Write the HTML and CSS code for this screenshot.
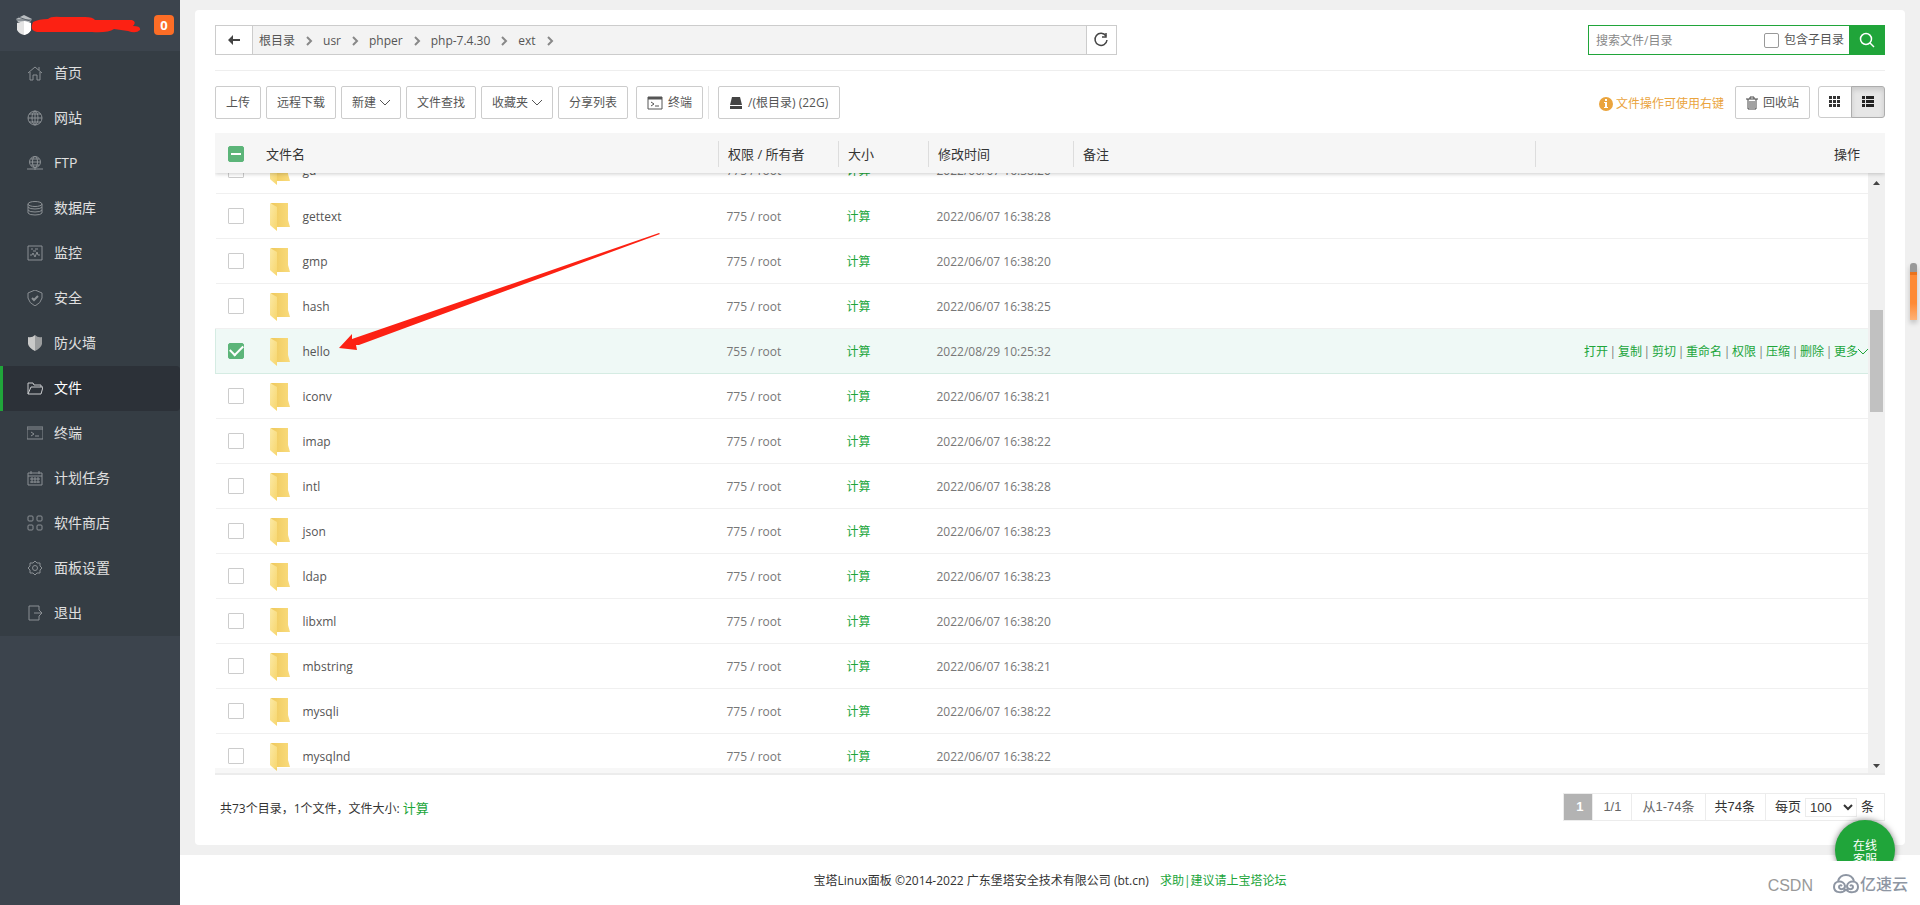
FILE: index.html
```html
<!DOCTYPE html>
<html lang="zh-CN">
<head>
<meta charset="utf-8">
<title>宝塔Linux面板</title>
<link rel="stylesheet" href="styles.css">
</head>
<body>
<svg class="defs" aria-hidden="true">
  <linearGradient id="flap" x1="0" y1="0" x2="1" y2="1"><stop offset="0" stop-color="#fbe9a4"/><stop offset="1" stop-color="#f7d66e"/></linearGradient>
  <linearGradient id="back" x1="0" y1="0" x2="1" y2="0"><stop offset="0" stop-color="#efc95c"/><stop offset="1" stop-color="#f9db7c"/></linearGradient>
  <symbol id="folder" viewBox="0 0 20 28">
    <path d="M1 0h17v17l2 7H7z" fill="url(#back)"/>
    <path d="M0 0l7 4v24l-6-5-1-1z" fill="url(#flap)"/>
  </symbol>
  <symbol id="down" viewBox="0 0 10 10"><path d="M0 2l5 5 5-5" fill="none" stroke="currentColor"/></symbol>
  <symbol id="right" viewBox="0 0 8 10"><path d="M2 1l4 4-4 4" fill="none" stroke="#888" stroke-width="2"/></symbol>
  <symbol id="term" viewBox="0 0 16 14"><path d="M1 1h14v12H1zM1 3h14M4 6l3 2-3 2M8 10h4" fill="none" stroke="currentColor"/><path d="M1 1h14v2H1z" fill="currentColor"/></symbol>
</svg>
<div class="app">
  <aside class="sidebar">
    <div class="brand">
      <svg class="logo" width="18" height="22" viewBox="0 0 18 22"><path d="M1 5l8-4 8 4-2 3H3z" fill="#b9bdc0"/><path d="M1 6h16M3 3l12 4" stroke="#5c646c"/><path d="M2 9l7-2 7 2v7q-2 4-7 5-5-1-7-5z" fill="#e4e4e4"/><path d="M9 7l7 2v7q-2 4-7 5z" fill="#fff"/></svg>
      <svg class="scribble" width="110" height="18" viewBox="0 0 110 18"><path d="M2 6q6-3 15-3Q20 0 30 1h24q8 0 10 3h37q5 2 1 6 8 0 7 4-4 4-12 1l-14-2q-6 4-22 3H6q-8-1-4-10z" fill="#fc2113"/></svg>
      <span class="badge">0</span>
    </div>
    <nav class="menu">
      <a href="#"><svg viewBox="0 0 16 16"><path d="M1 8l7-6 7 6M3 7v8h3v-5h4v5h3V7M12 5V2"/></svg>首页</a>
      <a href="#"><svg viewBox="0 0 16 16"><circle cx="8" cy="8" r="7"/><ellipse cx="8" cy="8" rx="3" ry="7"/><path d="M1 8h14M2 4h12M2 12h12M8 1v14"/></svg>网站</a>
      <a href="#"><svg viewBox="0 0 16 16"><circle cx="8" cy="7" r="5.500"/><ellipse cx="8" cy="7" rx="2.500" ry="5.500"/><path d="M3 7h10M4 4h8M4 10h8M8 12v3M0 14h16"/></svg>FTP</a>
      <a href="#"><svg viewBox="0 0 16 16"><ellipse cx="8" cy="4" rx="7" ry="2.500"/><path d="M1 4v9q1 2 7 2t7-2V4M1 7q1 2 7 2t7-2M1 10q1 2 7 2t7-2"/></svg>数据库</a>
      <a href="#"><svg viewBox="0 0 16 16"><path d="M1 1h14v14H1zM3 10h2l1-2 2 4 2-5 1 3h2M4 4h2M8 4h3M6 6h3"/></svg>监控</a>
      <a href="#"><svg viewBox="0 0 16 16"><path d="M8 0l7 3v5q-1 5-7 8-6-3-7-8V3z"/><path d="M5 8l2 2 4-4" stroke-width="2"/></svg>安全</a>
      <a href="#"><svg viewBox="0 0 16 16"><path d="M8 0q3 3 7 2v7q-1 4-7 7z" fill="#9b9d9e" stroke="none"/><path d="M8 0Q5 3 1 2v7q1 4 7 7z" fill="#c9c9c8" stroke="none"/></svg>防火墙</a>
      <a href="#" class="active"><svg viewBox="0 0 16 16"><path d="M1 14V3h5l1 2h7v2M1 14L4 7h12l-2 7z"/></svg>文件</a>
      <a href="#"><svg viewBox="0 0 16 16"><path d="M0 2h16v12H0zM0 4h16M4 7l3 2-3 2M8 11h4"/></svg>终端</a>
      <a href="#"><svg viewBox="0 0 16 16"><path d="M1 3h14v12H1zM1 6h14M4 1v3M12 1v3M3 9h10M3 12h10M5 7v6M8 7v6M11 7v6"/></svg>计划任务</a>
      <a href="#"><svg viewBox="0 0 16 16"><rect x="1" y="1" width="5" height="5" rx="1"/><rect x="10" y="1" width="5" height="5" rx="1"/><rect x="1" y="10" width="5" height="5" rx="1"/><rect x="10" y="10" width="5" height="5" rx="1"/></svg>软件商店</a>
      <a href="#"><svg viewBox="0 0 16 16"><circle cx="8" cy="8" r="2.500"/><path d="M6 3l2-2 2 2 3 0 0 3 2 2-2 2 0 3-3 0-2 2-2-2-3 0 0-3-2-2 2-2 0-3z"/></svg>面板设置</a>
      <a href="#"><svg viewBox="0 0 16 16"><path d="M12 5V1H2v14h10v-4M7 8h8M12 5l3 3-3 3"/></svg>退出</a>
    </nav>
  </aside>

  <div class="content">
    <main class="panel">
      <div class="pathrow">
        <div class="pathbar">
          <button class="back" aria-label="返回"><svg width="12" height="10" viewBox="0 0 12 10"><path d="M0 5l5-5v4h7v2H5v4z" fill="#444"/></svg></button>
          <div class="crumbs">
            <a href="#">根目录</a><svg class="sep"><use href="#right"/></svg><a href="#">usr</a><svg class="sep"><use href="#right"/></svg><a href="#">phper</a><svg class="sep"><use href="#right"/></svg><a href="#">php-7.4.30</a><svg class="sep"><use href="#right"/></svg><a href="#">ext</a><svg class="sep"><use href="#right"/></svg>
          </div>
          <button class="refresh" aria-label="刷新"><svg width="16" height="16" viewBox="0 0 16 16" fill="none" stroke="#444"><path d="M13 4a6 6 0 1 0 1 4" stroke-width="1.500"/><path d="M13 1v4H9" stroke-width="1.500"/></svg></button>
        </div>
        <form class="search">
          <input class="query" type="text" placeholder="搜索文件/目录" aria-label="搜索文件/目录">
          <input type="checkbox" id="sub"><label for="sub">包含子目录</label>
          <button type="button" aria-label="搜索"><svg width="16" height="16" viewBox="0 0 16 16" fill="none" stroke="#fff" stroke-width="1.500"><circle cx="7" cy="7" r="5.500"/><path d="M11 11l4 4"/></svg></button>
        </form>
      </div>

      <div class="toolbar">
        <button>上传</button>
        <button>远程下载</button>
        <button>新建<svg class="caret"><use href="#down"/></svg></button>
        <button>文件查找</button>
        <button>收藏夹<svg class="caret"><use href="#down"/></svg></button>
        <button>分享列表</button>
        <div class="termwrap"><button><svg class="ticon" width="16" height="14"><use href="#term"/></svg>终端</button></div>
        <button class="disk"><svg width="12" height="12" viewBox="0 0 12 12"><path d="M2 0h8l2 8H0zM0 9h12v3H0z" fill="#444"/></svg>/(根目录) (22G)</button>
        <div class="tip"><svg width="14" height="14" viewBox="0 0 14 14"><circle cx="7" cy="7" r="7" fill="#eaa43d"/><path d="M6 2h2v2H6zM5 5h3v5h1v1H5v-1h1V6H5z" fill="#fff"/></svg>文件操作可使用右键</div>
        <button><svg class="trash" width="12" height="14" viewBox="0 0 12 14" fill="none" stroke="#444"><path d="M0 3h12M4 3V1h4v2M2 3v10h8V3M4 5v7M6 5v7M8 5v7"/></svg>回收站</button>
        <div class="views">
          <button aria-label="图标视图"><svg width="12" height="12" viewBox="0 0 12 12" fill="#333"><path d="M0 0h3v3H0zM4 0h3v3H4zM8 0h3v3H8zM0 4h3v3H0zM4 4h3v3H4zM8 4h3v3H8zM0 8h3v3H0zM4 8h3v3H4zM8 8h3v3H8z"/></svg></button>
          <button class="on" aria-label="列表视图"><svg width="12" height="12" viewBox="0 0 12 12" fill="#222"><path d="M0 0h3v3H0zM4 0h8v3H4zM0 4h3v3H0zM4 4h8v3H4zM0 8h3v3H0zM4 8h8v3H4z"/></svg></button>
        </div>
      </div>

      <table class="files head">
        <colgroup><col class="c-check"><col class="c-name"><col class="c-perm"><col class="c-size"><col class="c-time"><col><col class="c-ops"></colgroup>
        <tr><th><input type="checkbox" class="partial" aria-label="全选"></th><th>文件名</th><th><span>权限 / 所有者</span></th><th><span>大小</span></th><th><span>修改时间</span></th><th><span>备注</span></th><th class="ops"><span>操作</span></th></tr>
      </table>
      <div class="listing">
        <div class="view">
          <table class="files body">
            <colgroup><col class="c-check"><col class="c-name"><col class="c-perm"><col class="c-size"><col class="c-time"><col><col class="c-ops"></colgroup>
            <tr><td><input type="checkbox" aria-label="gd"></td><td><div class="name"><svg><use href="#folder"/></svg>gd</div></td><td>775 / root</td><td><a href="#">计算</a></td><td>2022/06/07 16:38:20</td><td></td><td></td></tr>
            <tr><td><input type="checkbox" aria-label="gettext"></td><td><div class="name"><svg><use href="#folder"/></svg>gettext</div></td><td>775 / root</td><td><a href="#">计算</a></td><td>2022/06/07 16:38:28</td><td></td><td></td></tr>
            <tr><td><input type="checkbox" aria-label="gmp"></td><td><div class="name"><svg><use href="#folder"/></svg>gmp</div></td><td>775 / root</td><td><a href="#">计算</a></td><td>2022/06/07 16:38:20</td><td></td><td></td></tr>
            <tr><td><input type="checkbox" aria-label="hash"></td><td><div class="name"><svg><use href="#folder"/></svg>hash</div></td><td>775 / root</td><td><a href="#">计算</a></td><td>2022/06/07 16:38:25</td><td></td><td></td></tr>
            <tr class="selected"><td><input type="checkbox" checked aria-label="hello"></td><td><div class="name"><svg><use href="#folder"/></svg>hello</div></td><td>755 / root</td><td><a href="#">计算</a></td><td>2022/08/29 10:25:32</td><td></td><td class="ops"><div class="actions"><a href="#">打开</a><i>|</i><a href="#">复制</a><i>|</i><a href="#">剪切</a><i>|</i><a href="#">重命名</a><i>|</i><a href="#">权限</a><i>|</i><a href="#">压缩</a><i>|</i><a href="#">删除</a><i>|</i><a href="#">更多<svg class="caret"><use href="#down"/></svg></a></div></td></tr>
            <tr><td><input type="checkbox" aria-label="iconv"></td><td><div class="name"><svg><use href="#folder"/></svg>iconv</div></td><td>775 / root</td><td><a href="#">计算</a></td><td>2022/06/07 16:38:21</td><td></td><td></td></tr>
            <tr><td><input type="checkbox" aria-label="imap"></td><td><div class="name"><svg><use href="#folder"/></svg>imap</div></td><td>775 / root</td><td><a href="#">计算</a></td><td>2022/06/07 16:38:22</td><td></td><td></td></tr>
            <tr><td><input type="checkbox" aria-label="intl"></td><td><div class="name"><svg><use href="#folder"/></svg>intl</div></td><td>775 / root</td><td><a href="#">计算</a></td><td>2022/06/07 16:38:28</td><td></td><td></td></tr>
            <tr><td><input type="checkbox" aria-label="json"></td><td><div class="name"><svg><use href="#folder"/></svg>json</div></td><td>775 / root</td><td><a href="#">计算</a></td><td>2022/06/07 16:38:23</td><td></td><td></td></tr>
            <tr><td><input type="checkbox" aria-label="ldap"></td><td><div class="name"><svg><use href="#folder"/></svg>ldap</div></td><td>775 / root</td><td><a href="#">计算</a></td><td>2022/06/07 16:38:23</td><td></td><td></td></tr>
            <tr><td><input type="checkbox" aria-label="libxml"></td><td><div class="name"><svg><use href="#folder"/></svg>libxml</div></td><td>775 / root</td><td><a href="#">计算</a></td><td>2022/06/07 16:38:20</td><td></td><td></td></tr>
            <tr><td><input type="checkbox" aria-label="mbstring"></td><td><div class="name"><svg><use href="#folder"/></svg>mbstring</div></td><td>775 / root</td><td><a href="#">计算</a></td><td>2022/06/07 16:38:21</td><td></td><td></td></tr>
            <tr><td><input type="checkbox" aria-label="mysqli"></td><td><div class="name"><svg><use href="#folder"/></svg>mysqli</div></td><td>775 / root</td><td><a href="#">计算</a></td><td>2022/06/07 16:38:22</td><td></td><td></td></tr>
            <tr><td><input type="checkbox" aria-label="mysqlnd"></td><td><div class="name"><svg><use href="#folder"/></svg>mysqlnd</div></td><td>775 / root</td><td><a href="#">计算</a></td><td>2022/06/07 16:38:22</td><td></td><td></td></tr>
          </table>
        </div>
        <div class="scrollbar">
          <svg width="7" height="4" viewBox="0 0 7 4"><path d="M0 4l3.500-4L7 4z" fill="#444"/></svg>
          <div class="thumb"></div>
          <svg width="7" height="4" viewBox="0 0 7 4"><path d="M0 0l3.500 4L7 0z" fill="#444"/></svg>
        </div>
      </div>

      <div class="summary">
        <div class="counts">共73个目录，1个文件，文件大小: <a href="#">计算</a></div>
        <div class="pager">
          <span class="current">1</span><span class="muted">1/1</span><span class="muted">从1-74条</span><span>共74条</span>
          <span class="per"><label for="size">每页</label><select id="size"><option>100</option></select>条</span>
        </div>
      </div>
    </main>
    <footer class="footer"><span>宝塔Linux面板 ©2014-2022 广东堡塔安全技术有限公司 (bt.cn)</span><a href="#">求助|建议请上宝塔论坛</a></footer>
  </div>
</div>

<svg class="arrow" width="324" height="122" viewBox="0 0 324 122"><path d="M0 116L13 102l0 5L320 1 321 2 20 113l-3 0 1 5z" fill="#fc2113"/></svg>
<div class="side-tab"></div>
<div class="chat"><button>在线<br>客服</button></div>
<div class="marks"><span>CSDN</span>
  <svg width="26" height="20" viewBox="0 0 26 20" fill="none" stroke="#8e96a3" stroke-width="2"><path d="M5 7Q7 1 13 1t8 6"/><path d="M13 15c-3 5-12 4-12-2 0-7 10-7 11-1 0 4-6 4-6 1 0-2 2-2 3-1M13 15c3 5 12 4 12-2 0-7-10-7-11-1 0 4 6 4 6 1 0-2-2-2-3-1"/></svg>
  <b>亿速云</b>
</div>
</body>
</html>
```
FILE: styles.css
```css
* { box-sizing: border-box; }
body {
  margin: 0;
  background: #f0f0f0;
  color: #333;
  font: 12px/18px "Open Sans", "Noto Sans CJK SC", sans-serif;
  overflow: hidden;
}
a { color: #20a53a; text-decoration: none; }
button, input, select { font: inherit; color: inherit; margin: 0; }
svg { display: block; flex: none; }
.defs { position: absolute; width: 0; height: 0; }
.app { display: flex; height: 100vh; }

/* sidebar */
.sidebar { width: 180px; flex: none; background: #3c444d; }
.brand { height: 51px; display: flex; align-items: center; padding: 0 6px 2px 15px; }
.scribble { margin-left: -2px; }
.badge {
  margin-left: auto; width: 20px; height: 20px; border-radius: 4px;
  background: #fc6d26; color: #fff; font-weight: 700; font-size: 13px;
  line-height: 20px; text-align: center;
}
.menu { background: #353d44; }
.menu a {
  display: flex; align-items: center; gap: 11px; height: 45px;
  padding: 0 0 2px 24px; border-left: 3px solid transparent;
  color: #e0e0e0; font-size: 14px;
}
.menu svg { width: 16px; height: 16px; fill: none; stroke: #8b9094; }
.menu .active { background: #2c3138; border-left-color: #20a53a; border-radius: 0 4px 4px 0; color: #fff; }
.menu .active svg { stroke: #c9cbcd; }

/* main panel */
.content { flex: 1; min-width: 0; display: flex; flex-direction: column; }
.panel {
  flex: 1; min-height: 0; display: flex; flex-direction: column;
  margin: 10px 15px; padding: 0 20px; background: #fff; border-radius: 4px;
}
.pathrow {
  display: flex; justify-content: space-between; flex: none;
  padding: 15px 0; border-bottom: 1px solid #eee;
}
.pathbar { display: flex; width: 54%; height: 30px; border: 1px solid #ccc; background: #f3f3f3; }
.pathbar button {
  display: flex; align-items: center; justify-content: center;
  padding: 0; border: 0; background: #fff;
}
.pathbar .back { width: 37px; border-right: 1px solid #ccc; }
.pathbar .refresh { width: 30px; border-left: 1px solid #ccc; }
.crumbs { flex: 1; display: flex; align-items: center; gap: 10px; padding: 1px 0 0 6px; }
.crumbs a { color: #555; }
.sep { width: 8px; height: 10px; }
.search { display: flex; align-items: center; width: 297px; height: 30px; border: 1px solid #20a53a; }
.query { flex: 1; min-width: 0; height: 28px; padding: 0 7px; border: 0; outline: 0; background: none; }
.query::placeholder { color: #888; }
.search label { margin: 0 5px; color: #555; }
.search button {
  display: flex; align-items: center; justify-content: center;
  width: 35px; align-self: stretch; padding: 0; border: 0; background: #20a53a;
}

input[type="checkbox"] {
  appearance: none; display: grid; place-items: center; flex: none;
  width: 16px; height: 16px; border: 1px solid #ccc; border-radius: 1px; background: #fff;
}
.search input[type="checkbox"] { width: 15px; height: 15px; border-color: #999; border-radius: 2px; }
input.partial, .files input:checked { background: #5cb579; border-color: #5cb579; border-radius: 2px; }
input.partial::before { content: ""; width: 10px; height: 2px; background: #fff; }
.files input:checked::before {
  content: ""; width: 11px; height: 6px; margin-bottom: 3px;
  border: solid #fff; border-width: 0 0 2px 2px; transform: rotate(-45deg);
}

/* toolbar */
.toolbar { display: flex; flex: none; gap: 5px; padding: 15px 0 14px; }
.toolbar button {
  display: flex; align-items: center; height: 33px; padding: 0 10px;
  border: 1px solid #ccc; border-radius: 2px; background: #fff; color: #555; white-space: nowrap;
}
.caret { width: 10px; height: 10px; margin-left: 4px; }
.termwrap { margin-left: 3px; padding-right: 5px; border-right: 1px solid #e4e4e4; }
.ticon { margin-right: 5px; }
.toolbar .disk { margin-left: 4px; gap: 6px; padding: 0 11px; }
.tip { display: flex; align-items: center; gap: 3px; margin: 0 6px 0 auto; padding-top: 2px; color: #eaa43d; }
.trash { margin-right: 5px; }
.views { display: flex; margin-left: 3px; }
.views button { width: 34px; height: 32px; border-radius: 3px 0 0 3px; }
.views .on {
  margin-left: -1px; border-color: #adadad; border-radius: 0 3px 3px 0;
  background: #e6e6e6; box-shadow: inset 0 3px 5px rgba(0, 0, 0, .12);
}

/* file table */
.files { width: 100%; flex: none; border-collapse: collapse; table-layout: fixed; }
.files th, .files td { padding: 0; text-align: left; font-weight: 400; }
.c-check { width: 51px; }
.c-name { width: 452px; }
.c-perm { width: 120px; }
.c-size { width: 90px; }
.c-time { width: 145px; }
.c-ops { width: 350px; }
.body .c-ops { width: 333px; }
.files input { margin-left: 13px; }
.head { position: relative; z-index: 1; background: #f6f6f6; box-shadow: 0 1px 4px rgba(0, 0, 0, .2); clip-path: inset(0 0 -8px 0); }
.head th { height: 40px; padding-top: 2px; font-size: 13px; }
.head span { display: block; padding-left: 9px; line-height: 26px; border-left: 1px solid #ddd; }
.head .ops span { padding-right: 25px; text-align: right; }
.listing { flex: 1; min-height: 0; display: flex; border-bottom: 2px solid #ececec; }
.view { position: relative; flex: 1; min-width: 0; overflow: hidden; }
.view::after {
  content: ""; position: absolute; left: 0; right: 0; bottom: 0;
  height: 5px; background: rgba(0, 0, 0, .03);
}
/* the list is scrolled part way through its first row */
.body { margin-top: -25px; }
.body td { height: 45px; padding-top: 2px; border-bottom: 1px solid #f0f0f0; color: #777; }
.body td:first-child { padding-top: 0; }
.body input { margin-left: 12px; }
.body td:nth-child(3), .body td:nth-child(4), .body td:nth-child(5) { padding-left: 8px; }
.name { display: flex; align-items: center; gap: 13px; padding-left: 3px; color: #555; }
.name svg { width: 20px; height: 28px; }
.body .selected td { background: #eff9f6; border-top: 1px solid #d5ece3; border-bottom-color: #d5ece3; }
.body .selected td:first-child { border-left: 1px solid #d5ece3; }
.actions { display: flex; justify-content: flex-end; white-space: nowrap; }
.actions a { display: flex; align-items: center; }
.actions i { width: 10px; font-style: normal; text-align: center; }
.actions .caret { margin: 0; }

.scrollbar {
  width: 17px; flex: none; display: flex; flex-direction: column; align-items: center;
  padding: 8px 0 5px; background: #f0f0f0;
}
.thumb { width: 13px; height: 102px; margin: 125px 0 auto; background: #c1c1c1; }

.summary { flex: none; display: flex; justify-content: space-between; height: 70px; padding: 18px 0 0 5px; }
.counts { padding-top: 6px; }
.counts a { font-size: 13px; }
.pager { display: flex; height: 28px; border: 1px solid #ececec; font: 13px/26px "Liberation Sans", "Noto Sans CJK SC", sans-serif; }
.pager > span { padding: 0 10px 0 9px; border-left: 1px solid #ececec; }
.pager .current { padding: 0 9px 0 12px; border: 0; background: #b3b3b3; color: #fff; font-weight: 700; }
.pager .muted { color: #666; padding: 0 10px; }
.pager .per { display: flex; align-items: center; gap: 4px; }
.per select { width: 52px; height: 19px; padding: 0; border: 1px solid #ececec; background: #fff; }

.footer { flex: none; display: flex; justify-content: center; align-items: center; gap: 11px; height: 50px; padding-top: 2px; background: #fff; }

/* overlays */
.arrow { position: absolute; left: 339px; top: 232px; }
.side-tab {
  position: absolute; right: 3px; top: 263px; width: 7px; height: 57px; border-radius: 3px 3px 0 0;
  background: linear-gradient(#999 0 9px, #e9731d 9px 12px, #fe8a35 12px 40px, #fdb277);
  box-shadow: 0 3px 5px rgba(0, 0, 0, .2);
}
.chat { position: absolute; right: 15px; bottom: 44px; width: 80px; height: 51px; padding: 10px; overflow: hidden; }
.chat button {
  width: 60px; height: 60px; padding: 5px 0 0; border: 0; border-radius: 50%;
  background: #20a53a; color: #fff; line-height: 14px; box-shadow: 0 0 6px rgba(0, 0, 0, .5);
}
.marks { position: absolute; right: 12px; bottom: 9px; display: flex; align-items: center; color: #8e96a3; }
.marks span { margin-right: 20px; padding-top: 4px; font: 16px/20px "Liberation Sans", sans-serif; color: #999; }
.marks b { margin-left: 1px; font-weight: 500; font-size: 16px; line-height: 24px; }
```
